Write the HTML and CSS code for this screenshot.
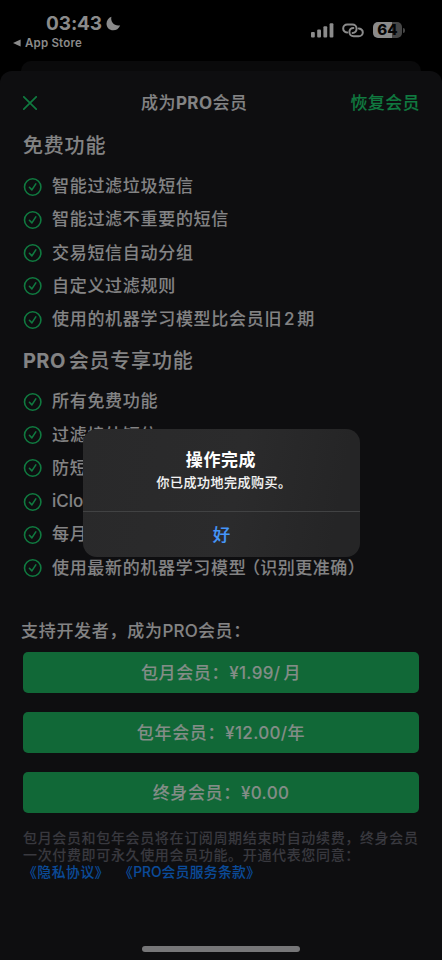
FILE: index.html
```html
<!DOCTYPE html>
<html lang="zh-CN">
<head>
<meta charset="utf-8">
<meta name="viewport" content="width=device-width, initial-scale=1">
<title>成为PRO会员</title>
<link rel="stylesheet" href="styles.css">
</head>
<body>
<svg class="defs" aria-hidden="true"><symbol id="check" viewBox="0 0 20 20"><circle cx="9.7" cy="10" r="8.2" fill="none" stroke="currentColor" stroke-width="1.6"/><path d="M6.4 10.3 8.9 12.9l3.9-6" fill="none" stroke="currentColor" stroke-width="1.6" stroke-linecap="round" stroke-linejoin="round"/></symbol></svg>
<div class="phone">
  <div class="status">
    <div class="status-left">
      <div class="clock"><span>03:43</span><svg class="moon" viewBox="0 0 15 15"><path d="M5.4.8C4.2 5.9 8.4 10.7 14.2 9.4 12.8 12.6 10.2 14.3 7.2 14.3 3.4 14.3.5 11.4.5 7.7.5 4.6 2.4 1.9 5.4.8Z" fill="currentColor"/></svg></div>
      <div class="back"><svg viewBox="0 0 8 8"><path d="M0 4 7.6.5v7Z" fill="currentColor"/></svg><span>App Store</span></div>
    </div>
    <div class="status-right">
      <svg class="signal" viewBox="0 0 23 15" fill="currentColor"><rect x="0" y="9" width="3.8" height="5.5" rx="1"/><rect x="6.2" y="6.5" width="3.8" height="8" rx="1"/><rect x="12.4" y="3.3" width="3.8" height="11.2" rx="1"/><rect x="18.6" y=".3" width="3.8" height="14.2" rx="1"/></svg>
      <svg class="link" viewBox="0 0 22 15" fill="none" stroke="currentColor" stroke-width="2" stroke-linecap="round"><path d="M5.2 9.4C2.7 9 1.2 7.4 1.2 5.4S2.8 1.6 5.3 1.6H10.4C12.8 1.6 14.6 3.4 14.6 5.8S12.8 9.9 10.6 9.9"/><path d="M16.8 5.4C19.3 5.8 20.8 7.4 20.8 9.4S19.2 13.2 16.7 13.2H11.6C9.2 13.2 7.4 11.4 7.4 9S9.2 4.9 11.4 4.9"/></svg>
      <div class="battery"><span class="level">64</span><i></i></div>
    </div>
  </div>
  <div class="back-sheet"></div>
  <main class="sheet">
    <header class="nav">
      <svg class="close" viewBox="0 0 14 14"><path d="M.8.8l12.4 12.4M13.2.8.8 13.2" stroke="currentColor" stroke-width="1.7" stroke-linecap="round"/></svg>
      <h1>成为<b>PRO</b>会员</h1>
      <span class="restore">恢复会员</span>
    </header>
    <h2>免费功能</h2>
    <ul>
      <li><svg><use href="#check"/></svg>智能过滤垃圾短信</li>
      <li><svg><use href="#check"/></svg>智能过滤不重要的短信</li>
      <li><svg><use href="#check"/></svg>交易短信自动分组</li>
      <li><svg><use href="#check"/></svg>自定义过滤规则</li>
      <li><svg><use href="#check"/></svg>使用的机器学习模型比会员旧<span class="digit">2</span>期</li>
    </ul>
    <h2 class="pro"><b>PRO</b>会员专享功能</h2>
    <ul>
      <li><svg><use href="#check"/></svg>所有免费功能</li>
      <li><svg><use href="#check"/></svg>过滤境外短信</li>
      <li><svg><use href="#check"/></svg>防短信轰炸</li>
      <li><svg><use href="#check"/></svg><span class="latin">iCloud</span>同步</li>
      <li><svg><use href="#check"/></svg>每月更新</li>
      <li class="punct"><svg><use href="#check"/></svg><span>使用最新的机器学习模型</span><span class="aside">（识别更准确）</span></li>
    </ul>
    <p class="intro">支持开发者，成为<span>PRO</span>会员：</p>
    <div class="plans">
      <div class="plan">包月会员：<span class="price">¥1.99/</span><span class="unit">月</span></div>
      <div class="plan">包年会员：<span class="price">¥12.00/</span>年</div>
      <div class="plan">终身会员：<span class="price">¥0.00</span></div>
    </div>
    <div class="terms">
      <p>包月会员和包年会员将在订阅周期结束时自动续费，终身会员</p>
      <p>一次付费即可永久使用会员功能。开通代表您同意：</p>
      <p class="links"><a>《隐私协议》</a><a>《<span>PRO</span>会员服务条款》</a></p>
    </div>
  </main>
  <div class="home"></div>
  <section class="alert">
    <div class="alert-body"><h3>操作完成</h3><p>你已成功地完成购买。</p></div>
    <div class="ok">好</div>
  </section>
</div>
</body>
</html>
```
FILE: styles.css
```css
* { box-sizing: border-box; margin: 0; padding: 0; }
body { background: #000; }
svg { display: block; flex: none; }
.defs { position: absolute; width: 0; height: 0; }
.phone {
  position: relative;
  width: 442px;
  height: 960px;
  overflow: hidden;
  display: flex;
  flex-direction: column;
  background: #000;
  color: #838384;
  font-family: Inter, "Noto Sans CJK SC", sans-serif;
  font-weight: 500;
  white-space: nowrap;
}
.status { height: 61px; display: flex; justify-content: space-between; padding: 11px 37px 0 13px; color: #8b8b8b; }
.clock { display: flex; align-items: center; gap: 4px; height: 24px; padding-left: 33px; font-size: 19px; font-weight: 700; letter-spacing: -.1px; }
.moon { width: 15px; height: 15px; }
.back { display: flex; align-items: center; gap: 4px; height: 16px; font-size: 11.5px; font-weight: 600; letter-spacing: .2px; }
.back svg { width: 8px; height: 8px; }
.status-right { display: flex; align-items: center; height: 38px; }
.signal { width: 23px; height: 15px; }
.link { width: 22px; height: 15px; margin-left: 8px; }
.battery { display: flex; align-items: center; margin-left: 9px; }
.level { width: 29px; height: 16px; border-radius: 5px; background: linear-gradient(90deg, #8b8b8b 64%, #464646 64%); color: #050505; font-size: 15px; line-height: 16px; font-weight: 800; text-align: center; }
.battery i { width: 2px; height: 5px; margin-left: 1px; border-radius: 0 2px 2px 0; background: #464646; }
.back-sheet { height: 10px; margin: 0 21px; border-radius: 10px 10px 0 0; background: #0a0a0b; }
.sheet { flex: 1; padding: 17px 23px 0; border-radius: 12px 12px 0 0; background: #0e0e10; -webkit-text-stroke: .1px currentColor; }
.nav { display: flex; align-items: center; height: 30px; }
.close { width: 14px; height: 14px; color: #107a40; }
h1 { margin-left: 104px; font-size: 17px; font-weight: 500; letter-spacing: .45px; line-height: 30px; }
h1 b { font-weight: 700; }
.restore { margin-left: auto; margin-right: -1px; color: #107a40; font-size: 17px; letter-spacing: .4px; line-height: 30px; }
h2 { height: 32px; margin: 11px 0 9px; padding-top: 1px; font-size: 20px; line-height: 32px; font-weight: 500; letter-spacing: .8px; }
h2.pro { margin: 8px 0 9px; }
h2 b { font-weight: 700; letter-spacing: .4px; margin-right: 3px; }
ul { list-style: none; }
li { display: flex; align-items: center; height: 33.25px; font-size: 17px; letter-spacing: .7px; line-height: 33px; }
li svg { width: 20px; height: 20px; margin-right: 9px; color: #107a40; }
.digit { margin: 0 2px; }
.latin { letter-spacing: 0; }
.punct { letter-spacing: .67px; }
.aside { margin-left: -3.5px; letter-spacing: .5px; }
.intro { height: 26px; margin: 33px 0 8px -2px; font-size: 17px; line-height: 26px; letter-spacing: .7px; }
.intro span { letter-spacing: .1px; }
.plans { display: flex; flex-direction: column; gap: 19px; }
.plan { height: 41px; border-radius: 5px; background: #116837; color: #838d87; text-align: center; font-size: 17px; line-height: 43px; letter-spacing: .65px; }
.price { letter-spacing: .35px; }
.unit { margin-left: 3px; }
.terms { margin-top: 16px; color: #39393f; font-size: 14px; line-height: 17.3px; letter-spacing: .65px; }
.links { display: flex; gap: 11px; margin-left: 1px; padding-top: 1px; color: #0b4b99; font-size: 13.8px; letter-spacing: .55px; }
.links a { font-feature-settings: "halt" 0; margin-left: -1px; }
.links span { letter-spacing: 0; }
.links a + a { letter-spacing: .3px; }
.home { position: absolute; left: 142px; top: 946px; width: 158px; height: 6px; border-radius: 3px; background: #767678; }
.alert { position: absolute; left: 83px; top: 429px; width: 277px; height: 128px; border-radius: 14px; overflow: hidden; background: linear-gradient(100deg, #29292a, #2b2b2c 55%, #252526 90%); text-align: center; }
.alert-body { height: 83px; padding-top: 18px; border-bottom: 1px solid #414243; color: #fff; }
h3 { margin-left: -1px; font-size: 17px; line-height: 26px; font-weight: 700; letter-spacing: .6px; }
.alert-body p { padding-left: 5px; font-size: 13px; line-height: 18px; letter-spacing: .5px; color: #f4f4f4; -webkit-text-stroke: .1px currentColor; }
.ok { color: #4595f7; font-size: 17.5px; line-height: 45px; -webkit-text-stroke: .1px currentColor; }
```
